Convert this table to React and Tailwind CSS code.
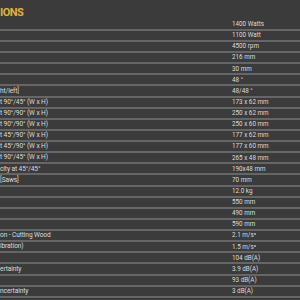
import React from "react";

const specs = [
  ["", "1400 Watts"],
  ["", "1100 Watt"],
  ["", "4500 rpm"],
  ["", "216 mm"],
  ["", "30 mm"],
  ["", "48 °"],
  ["ht/left]", "48/48 °"],
  ["t 90°/45° (W x H)", "173 x 62 mm"],
  ["t 90°/90° (W x H)", "250 x 62 mm"],
  ["t 90°/90° (W x H)", "250 x 60 mm"],
  ["t 45°/90° (W x H)", "177 x 62 mm"],
  ["t 45°/90° (W x H)", "177 x 60 mm"],
  ["t 90°/45° (W x H)", "265 x 48 mm"],
  ["city at 45°/45°", "190x48 mm"],
  ["[Saws]", "70 mm"],
  ["", "12.0 kg"],
  ["", "550 mm"],
  ["", "490 mm"],
  ["", "590 mm"],
  ["on - Cutting Wood", "2.1 m/s²"],
  ["ibration)", "1.5 m/s²"],
  ["", "104 dB(A)"],
  ["ertainty", "3.9 dB(A)"],
  ["", "93 dB(A)"],
  ["ncertainty", "3 dB(A)"],
];

const App = () => {
  return (
    <div className="w-[300px] h-[300px] overflow-hidden bg-[#3b3b3b] font-['Roboto',sans-serif]">
      {/* header, cut off at the left edge */}
      <div className="h-[19.7px] pt-[7px]">
        <span className="block text-[11px] leading-none font-bold tracking-[-0.5px] text-[#e2b435]">
          IONS
        </span>
      </div>

      {specs.map(([label, value], i) => (
        <div
          key={i}
          className="flex h-[11.125px] border-b-2 border-[#666666] text-[#dcdcdc]"
        >
          <div className="w-[232px] flex items-center text-[6.6px] leading-none tracking-[-0.1px] whitespace-nowrap overflow-hidden">
            {label}
          </div>
          <div className="flex-1 flex items-center text-[6.3px] leading-none whitespace-nowrap">
            {value}
          </div>
        </div>
      ))}
    </div>
  );
};

export default App;
